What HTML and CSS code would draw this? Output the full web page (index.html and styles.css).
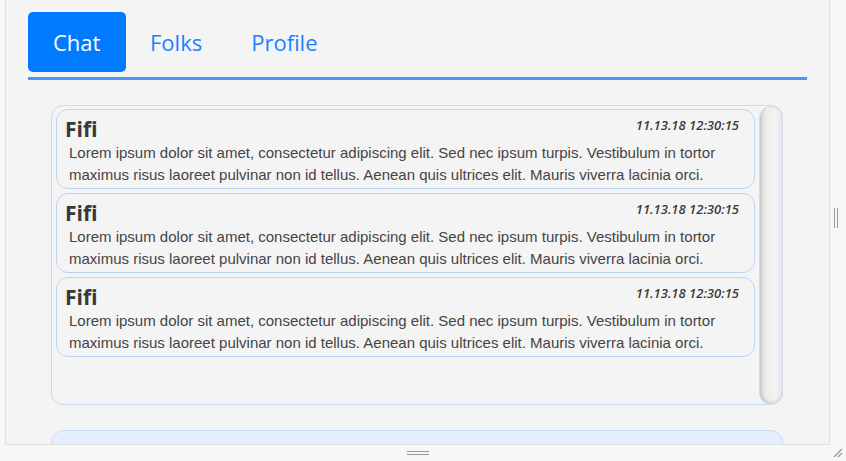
FILE: index.html
```html
<!DOCTYPE html>
<html lang="en">
<head>
    <meta charset="UTF-8">
    <meta name="viewport" content="width=device-width, initial-scale=1.0">
    <title>Chat</title>
    <link rel="stylesheet" href="styles.css">
</head>
<body>
    <div class="frame">
        <div class="panel">
            <nav class="tabs">
                <a class="tab active" href="#">Chat</a>
                <a class="tab" href="#">Folks</a>
                <a class="tab" href="#">Profile</a>
            </nav>

            <div class="chat-box">
                <div class="messages">
                    <div class="message">
                        <div class="message-head">
                            <span class="author">Fifi</span>
                            <span class="time">11.13.18 12:30:15</span>
                        </div>
                        <p class="text">Lorem ipsum dolor sit amet, consectetur adipiscing elit. Sed nec ipsum turpis. Vestibulum in tortor maximus risus laoreet pulvinar non id tellus. Aenean quis ultrices elit. Mauris viverra lacinia orci.</p>
                    </div>
                    <div class="message">
                        <div class="message-head">
                            <span class="author">Fifi</span>
                            <span class="time">11.13.18 12:30:15</span>
                        </div>
                        <p class="text">Lorem ipsum dolor sit amet, consectetur adipiscing elit. Sed nec ipsum turpis. Vestibulum in tortor maximus risus laoreet pulvinar non id tellus. Aenean quis ultrices elit. Mauris viverra lacinia orci.</p>
                    </div>
                    <div class="message">
                        <div class="message-head">
                            <span class="author">Fifi</span>
                            <span class="time">11.13.18 12:30:15</span>
                        </div>
                        <p class="text">Lorem ipsum dolor sit amet, consectetur adipiscing elit. Sed nec ipsum turpis. Vestibulum in tortor maximus risus laoreet pulvinar non id tellus. Aenean quis ultrices elit. Mauris viverra lacinia orci.</p>
                    </div>
                </div>
                <div class="scroll-thumb"></div>
            </div>

            <div class="compose"></div>
        </div>

        <div class="side-gutter">
            <span class="grip-v"></span>
        </div>
    </div>

    <div class="bottom-gutter">
        <span class="grip-h"></span>
        <svg class="resize-corner" width="12" height="12" viewBox="0 0 12 12">
            <path d="M11 3 L3 11 M11 7 L7 11" stroke="#9a9a9a" stroke-width="1.2" fill="none"/>
        </svg>
    </div>
</body>
</html>
```

FILE: styles.css
```css
* {
    box-sizing: border-box;
}
body {
    margin: 0;
    height: 461px;
    overflow: hidden;
    background-color: #f7f7f7;
    font-family: "Open Sans", "Noto Sans", sans-serif;
}
.frame {
    display: flex;
    height: 445px;
}
.panel {
    width: 825px;
    margin-left: 5px;
    height: 445px;
    padding: 12px 22px 0 22px;
    background-color: #f4f4f4;
    border: 1px solid #e0e0e0;
    border-top: none;
    overflow: hidden;
}

/* tabs */
.tabs {
    display: flex;
    border-bottom: 3px solid #4a94ff;
    padding-bottom: 5px;
}
.tab {
    display: block;
    height: 60px;
    line-height: 60px;
    padding: 0 25px;
    font-size: 22px;
    color: #1a82ff;
    text-decoration: none;
    border-radius: 5px;
}
.tab.active {
    width: 98px;
    background-color: #007bff;
    color: #fff;
}
.tab:nth-child(2) {
    padding-left: 24px;
}
.tab:last-child {
    padding-left: 24px;
}

/* message list */
.chat-box {
    display: flex;
    gap: 4px;
    height: 300px;
    margin: 25px 24px 0 23px;
    padding: 3px 0 0 4px;
    border: 1px solid #c8daf5;
    border-radius: 12px;
}
.messages {
    flex: 1;
    display: flex;
    flex-direction: column;
    gap: 4px;
}
.message {
    height: 80px;
    padding: 5px 15px 0 8px;
    border: 1px solid #bcd3f7;
    border-radius: 12px;
}
.message-head {
    display: flex;
    justify-content: space-between;
    align-items: flex-start;
    height: 27px;
}
.author {
    font-size: 21px;
    font-weight: 700;
    color: #383838;
}
.time {
    margin-top: 1px;
    font-size: 13px;
    font-style: italic;
    font-weight: 600;
    color: #3a3a3a;
}
.text {
    margin: 0 0 0 4px;
    font-family: "Liberation Sans", Arial, sans-serif;
    font-size: 15px;
    line-height: 22px;
    color: #444;
}
.scroll-thumb {
    width: 24px;
    margin: -3px -1px -1px 0;
    border: 1px solid #cfdbea;
    border-radius: 12px;
    background: linear-gradient(to right, #d9d9d9, #efefef 35%, #f2f2f2 70%, #e6e6e6);
    box-shadow: inset 1px -2px 3px rgba(0, 0, 0, 0.12);
}

/* input area, cut off by the panel edge */
.compose {
    height: 60px;
    margin: 25px 24px 0 23px;
    background-color: #e5eeff;
    border: 1px solid #c8daf5;
    border-radius: 12px;
}

/* splitter gutters */
.side-gutter {
    flex: 1;
    display: flex;
    align-items: center;
    padding-left: 4px;
    padding-bottom: 10px;
}
.grip-v {
    width: 4px;
    height: 20px;
    border-left: 1px solid #999;
    border-right: 1px solid #999;
}
.bottom-gutter {
    position: relative;
    height: 16px;
    display: flex;
    justify-content: center;
    padding-top: 6px;
    padding-right: 10px;
}
.grip-h {
    width: 22px;
    height: 4px;
    border-top: 1px solid #999;
    border-bottom: 1px solid #999;
}
.resize-corner {
    position: absolute;
    right: 3px;
    bottom: 3px;
}
```
